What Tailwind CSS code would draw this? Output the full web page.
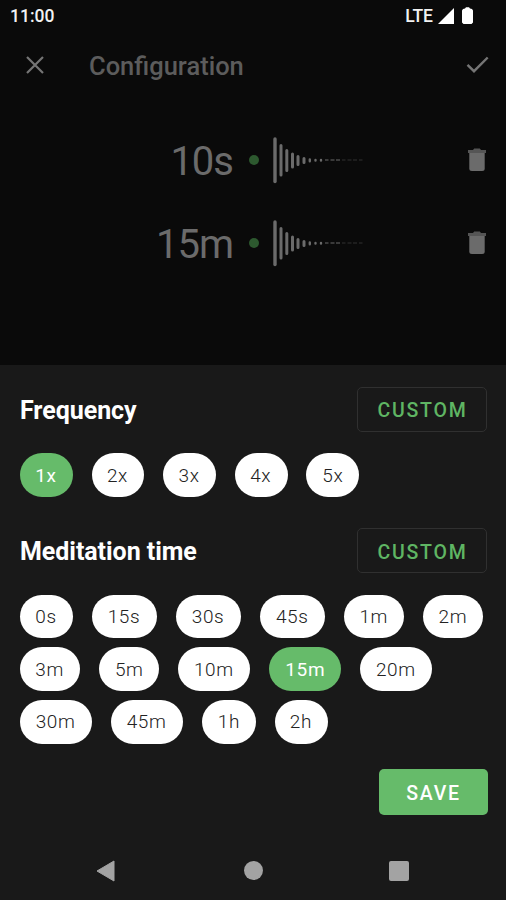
<!DOCTYPE html>
<html lang="en">
<head>
<meta charset="utf-8">
<title>Configuration</title>
<script src="https://cdn.jsdelivr.net/npm/@tailwindcss/browser@4"></script>
</head>
<body class="bg-[#0a0a0a]">
<svg class="hidden">
  <symbol id="wave" viewBox="0 0 100 48">
    <g fill="none" stroke="#6b6b6b" stroke-linecap="round">
      <path stroke-width="3.4" d="M3 3V45.500"/>
      <path stroke-width="3" d="M9 9.500V39M14.800 14.500V34.500M20.500 18V31M26 20.500V28.500M32 22.500V26.500"/>
      <path stroke-width="2.400" d="M37.800 23.500V25.200M43.500 23.900V24.600M49 24V24.500"/>
      <path stroke-width="1.400" stroke-linecap="butt" stroke="#4b4b4b" d="M53 24h3.500M58.500 24h4M64 24h4"/>
      <path stroke-width="1" stroke-linecap="butt" stroke="#303030" d="M70 24h3.500M75.500 24h4M81 24h4M87 24h3.500"/>
    </g>
  </symbol>
  <symbol id="trash" viewBox="0 0 18 24">
    <path fill="#555" d="M0 2h5L6.200 .5h5.600L13 2h5v3H0z"/>
    <path fill="#6b6b6b" d="M1.300 5h15.400v15.500a2.500 2.500 0 0 1-2.500 2.500H3.800a2.500 2.500 0 0 1-2.500-2.500z"/>
  </symbol>
</svg>
<div class="w-[506px] h-[900px] overflow-hidden flex flex-col bg-[#0a0a0a] font-['Roboto',sans-serif]">
  <div class="h-8 shrink-0 flex items-center justify-between pl-[10px] pr-[33px] text-[#f2f2f2] font-medium text-[17.500px] leading-8">
    <span>11:00</span>
    <div class="flex items-center -mt-px">
      <span class="text-[17.500px]">LTE</span>
      <svg class="ml-[5px] w-4 h-4" viewBox="0 0 16 16"><path fill="#fff" d="M16 0V16H0z"/></svg>
      <svg class="ml-2 w-[11px] h-[17px]" viewBox="0 0 11 17"><path fill="#fff" d="M3 1.500L4 .3h3l1 1.200 2 .5 1 1.500V15.500L9.500 17h-8L0 15.500V3.500L1 2z"/></svg>
    </div>
  </div>
  <header class="h-[65px] shrink-0 flex items-center pl-[26px] pr-[17px]">
    <svg class="w-[18px] h-[18px]" viewBox="0 0 18 18"><path fill="none" stroke="#757575" stroke-width="2.200" d="M1 1L17 17M17 1L1 17"/></svg>
    <h1 class="ml-[45px] pt-[2px] flex-1 font-medium text-[25.500px] leading-8 text-[#5c5c5c]">Configuration</h1>
    <svg class="w-[23px] h-[17px]" viewBox="0 0 23 17"><path fill="none" stroke="#757575" stroke-width="2.400" d="M1.500 8.800L8 15.200 21.700 1.500"/></svg>
  </header>
  <main class="flex-1 pt-[22px]">
    <div class="h-[82.500px] flex items-center">
      <span class="w-[234px] pt-[4px] text-right text-[40px] tracking-[-1px] pr-px leading-[48px] text-[#6b6b6b]">10s</span>
      <span class="ml-[15px] size-[10px] rounded-full bg-[#2d592f]"></span>
      <svg class="ml-[13px] w-[100px] h-12"><use href="#wave"/></svg>
      <svg class="ml-[96px] w-[18px] h-6"><use href="#trash"/></svg>
    </div>
    <div class="h-[82.500px] flex items-center">
      <span class="w-[234px] pt-[4px] text-right text-[40px] tracking-[-1px] pr-px leading-[48px] text-[#6b6b6b]">15m</span>
      <span class="ml-[15px] size-[10px] rounded-full bg-[#2d592f]"></span>
      <svg class="ml-[13px] w-[100px] h-12"><use href="#wave"/></svg>
      <svg class="ml-[96px] w-[18px] h-6"><use href="#trash"/></svg>
    </div>
  </main>
  <section class="h-[535px] shrink-0 bg-[#191919] px-5 pt-[22px] flex flex-col">
    <div class="h-[45px] flex items-center justify-between w-[467px]">
      <h2 class="pt-[2px] font-bold text-[25px] tracking-[-.05px] leading-8 text-white">Frequency</h2>
      <button class="w-[130px] h-[45px] rounded-[5px] border-[1.500px] border-[#303030] text-[#5fb563] font-medium text-[19.500px] tracking-[1.750px] pl-[1px] pt-[2px]">CUSTOM</button>
    </div>
    <div class="mt-[21px] flex gap-[18.800px] text-[19px] font-light tracking-[.6px] text-[#222]">
      <span class="w-[52.800px] h-[44px] rounded-full bg-[#66bb6a] text-white font-normal flex items-center justify-center pt-[2px] pr-px">1x</span>
      <span class="w-[52.800px] h-[44px] rounded-full bg-white flex items-center justify-center pt-[2px] pr-px">2x</span>
      <span class="w-[52.800px] h-[44px] rounded-full bg-white flex items-center justify-center pt-[2px] pr-px">3x</span>
      <span class="w-[52.800px] h-[44px] rounded-full bg-white flex items-center justify-center pt-[2px] pr-px">4x</span>
      <span class="w-[52.800px] h-[44px] rounded-full bg-white flex items-center justify-center pt-[2px]">5x</span>
    </div>
    <div class="mt-[31px] h-[45px] flex items-center justify-between w-[467px]">
      <h2 class="pt-[2px] font-bold text-[25px] tracking-[-.05px] leading-8 text-white">Meditation time</h2>
      <button class="w-[130px] h-[45px] rounded-[5px] border-[1.500px] border-[#303030] text-[#5fb563] font-medium text-[19.500px] tracking-[1.750px] pl-[1px] pt-[4px]">CUSTOM</button>
    </div>
    <div class="mt-[21.600px] flex flex-col gap-[8.800px] text-[19px] font-light tracking-[.6px] text-[#222]">
      <div class="flex gap-[18.800px]">
        <span class="w-[53px] h-[43.800px] rounded-full bg-white flex items-center justify-center pt-[2px] pr-px">0s</span>
        <span class="w-[65.300px] h-[43.800px] rounded-full bg-white flex items-center justify-center pt-[2px] pr-px">15s</span>
        <span class="w-[65.300px] h-[43.800px] rounded-full bg-white flex items-center justify-center pt-[2px] pr-px">30s</span>
        <span class="w-[65.300px] h-[43.800px] rounded-full bg-white flex items-center justify-center pt-[2px] pr-px">45s</span>
        <span class="w-[60.300px] h-[43.800px] rounded-full bg-white flex items-center justify-center pt-[2px] pr-px">1m</span>
        <span class="w-[60.300px] h-[43.800px] rounded-full bg-white flex items-center justify-center pt-[2px] pr-px">2m</span>
      </div>
      <div class="flex gap-[18.800px]">
        <span class="w-[60.300px] h-[43.800px] rounded-full bg-white flex items-center justify-center pt-[2px] pr-px">3m</span>
        <span class="w-[60.300px] h-[43.800px] rounded-full bg-white flex items-center justify-center pt-[2px]">5m</span>
        <span class="w-[72.200px] h-[43.800px] rounded-full bg-white flex items-center justify-center pt-[2px] pr-px">10m</span>
        <span class="w-[72.200px] h-[43.800px] rounded-full bg-[#66bb6a] text-white font-normal flex items-center justify-center pt-[2px]">15m</span>
        <span class="w-[72.200px] h-[43.800px] rounded-full bg-white flex items-center justify-center pt-[2px] pr-px">20m</span>
      </div>
      <div class="flex gap-[18.800px]">
        <span class="w-[72.200px] h-[43.800px] rounded-full bg-white flex items-center justify-center pt-[2px] pr-px">30m</span>
        <span class="w-[72.200px] h-[43.800px] rounded-full bg-white flex items-center justify-center pt-[2px] pr-px">45m</span>
        <span class="w-[53.800px] h-[43.800px] rounded-full bg-white flex items-center justify-center pt-[2px]">1h</span>
        <span class="w-[53.800px] h-[43.800px] rounded-full bg-white flex items-center justify-center pt-[2px] pr-px">2h</span>
      </div>
    </div>
    <button class="mt-[25px] ml-[358.500px] w-[109px] h-[46px] shrink-0 rounded-[5px] bg-[#66bb6a] text-white font-medium text-[19.500px] tracking-[1.750px] pt-[4px] pl-px">SAVE</button>
    <nav class="mt-[45px] flex items-center pl-[76px]">
      <svg class="w-[19px] h-[22px]" viewBox="0 0 19 22"><path fill="#a3a3a3" stroke="#a3a3a3" stroke-linejoin="round" d="M1 11L18 1V21z"/></svg>
      <span class="ml-[129px] size-[19px] rounded-full bg-[#a3a3a3]"></span>
      <span class="ml-[126px] size-[20px] rounded-[2px] bg-[#a3a3a3]"></span>
    </nav>
  </section>
</div>
</body>
</html>
